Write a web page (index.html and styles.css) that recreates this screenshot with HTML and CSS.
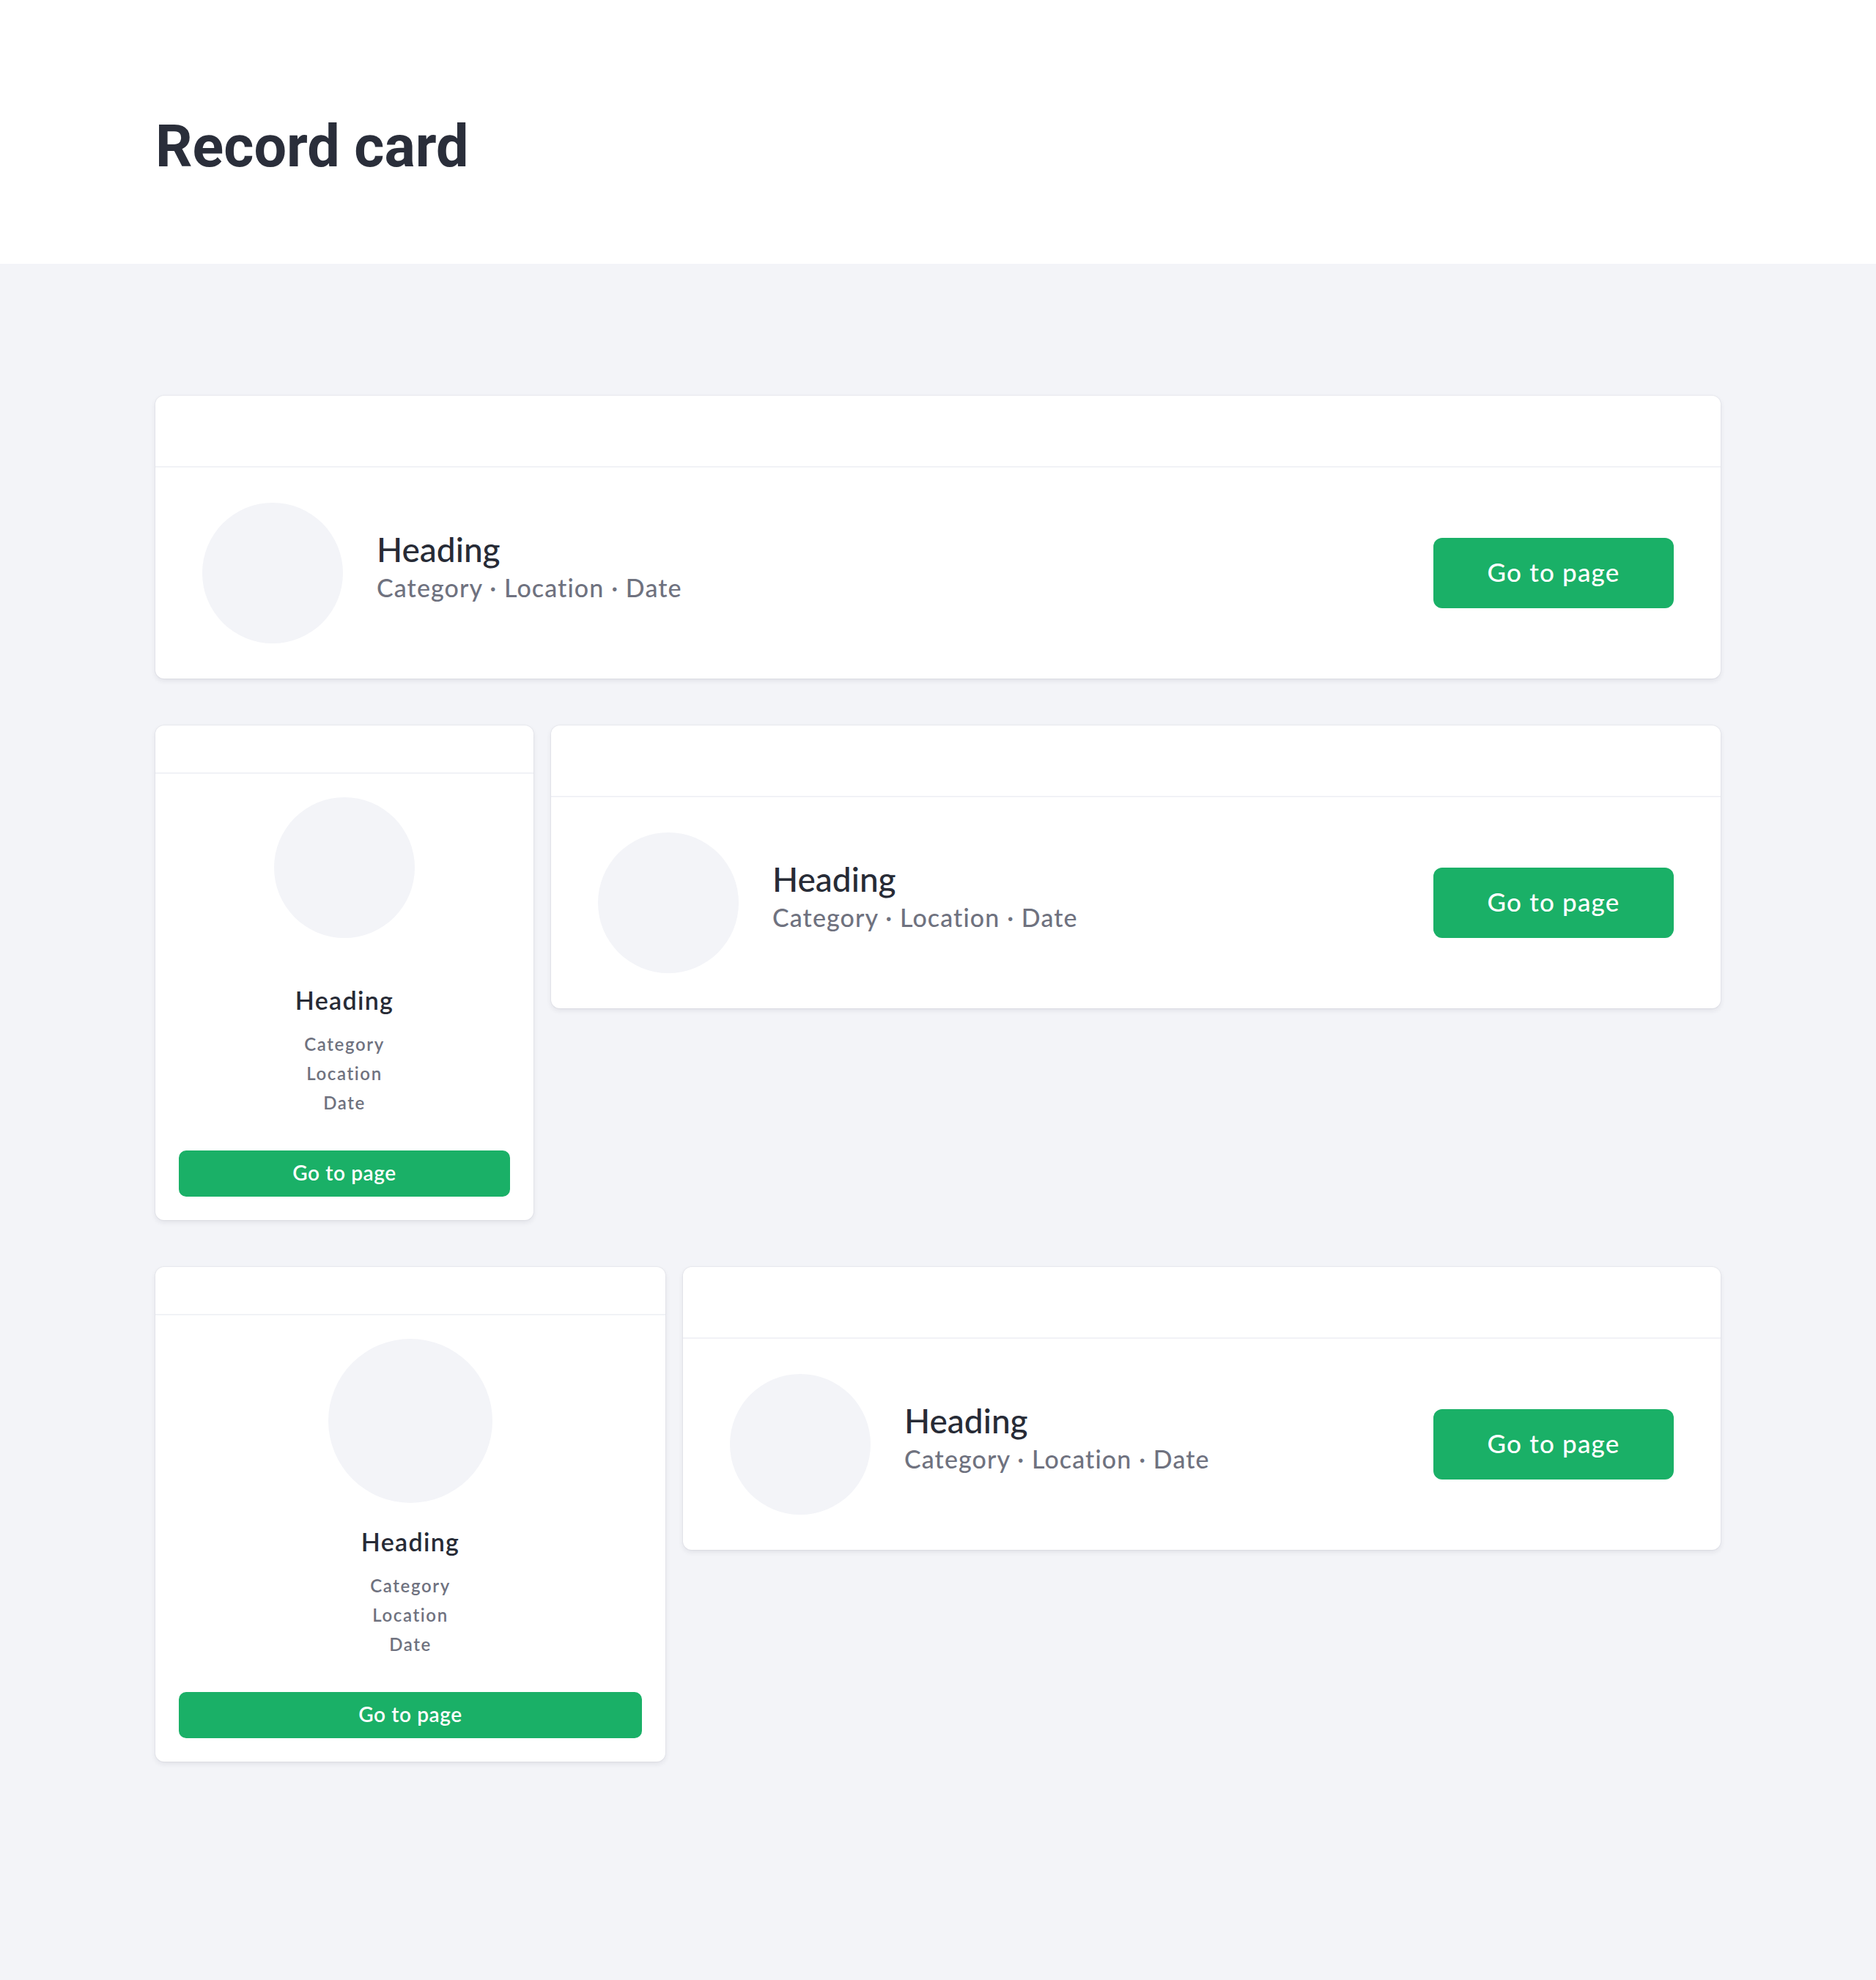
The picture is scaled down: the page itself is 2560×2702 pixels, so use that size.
FILE: index.html
```html
<!DOCTYPE html>
<html lang="en">
<head>
<meta charset="utf-8">
<title>Record card</title>
<link rel="stylesheet" href="styles.css">
</head>
<body>
<header class="page-header">
  <h1 class="page-title">Record card</h1>
</header>
<main class="page-main">
  <div class="row">
    <div class="card card--wide">
      <div class="card-head"></div>
      <div class="card-body-h">
        <div class="avatar"></div>
        <div class="info-h">
          <div class="heading-h">Heading</div>
          <div class="meta-h">Category · Location · Date</div>
        </div>
        <a class="btn-h">Go to page</a>
      </div>
    </div>
  </div>

  <div class="row">
    <div class="card card--narrow">
      <div class="card-head card-head--small"></div>
      <div class="card-body-v">
        <div class="avatar-box"><div class="avatar"></div></div>
        <div class="heading-v">Heading</div>
        <div class="meta-v">
          <span>Category</span>
          <span>Location</span>
          <span>Date</span>
        </div>
        <a class="btn-v">Go to page</a>
      </div>
    </div>
    <div class="card card--wide">
      <div class="card-head"></div>
      <div class="card-body-h">
        <div class="avatar"></div>
        <div class="info-h">
          <div class="heading-h">Heading</div>
          <div class="meta-h">Category · Location · Date</div>
        </div>
        <a class="btn-h">Go to page</a>
      </div>
    </div>
  </div>

  <div class="row">
    <div class="card card--medium">
      <div class="card-head card-head--small"></div>
      <div class="card-body-v">
        <div class="avatar-box"><div class="avatar avatar--large"></div></div>
        <div class="heading-v">Heading</div>
        <div class="meta-v">
          <span>Category</span>
          <span>Location</span>
          <span>Date</span>
        </div>
        <a class="btn-v">Go to page</a>
      </div>
    </div>
    <div class="card card--wide">
      <div class="card-head"></div>
      <div class="card-body-h">
        <div class="avatar"></div>
        <div class="info-h">
          <div class="heading-h">Heading</div>
          <div class="meta-h">Category · Location · Date</div>
        </div>
        <a class="btn-h">Go to page</a>
      </div>
    </div>
  </div>
</main>
</body>
</html>
```

FILE: styles.css
```css
* { box-sizing: border-box; }

html {
  background: #f3f4f8;
}

body {
  margin: 0;
  font-family: "Lato", "Open Sans", sans-serif;
  color: #272b36;
  background: #f3f4f8;
}

.page-header {
  height: 360px;
  background: #ffffff;
  padding: 161px 212px 0;
}

.page-title {
  margin: 0;
  font-family: "Roboto", "Liberation Sans", sans-serif;
  font-weight: 700;
  font-size: 79px;
  line-height: 79px;
  color: #2a2e3a;
}

.page-main {
  padding: 180px 212px 296px;
  display: flex;
  flex-direction: column;
  gap: 64px;
}

.row {
  display: flex;
  align-items: flex-start;
  gap: 24px;
}

.card {
  background: #ffffff;
  border-radius: 12px;
  box-shadow: 0 0 0 1px rgba(30, 35, 60, 0.035), 0 3px 7px rgba(30, 35, 60, 0.09);
  overflow: hidden;
}

.card--wide { flex: 1 1 auto; }
.card--narrow { flex: 0 0 516px; }
.card--medium { flex: 0 0 696px; }

.card-head {
  height: 98px;
  border-bottom: 2px solid #f1f2f6;
}

.card-head--small {
  height: 66px;
}

.avatar {
  width: 192px;
  height: 192px;
  border-radius: 50%;
  background: #f3f4f8;
  flex: 0 0 auto;
}

.avatar--large {
  width: 224px;
  height: 224px;
}

/* horizontal layout */
.card-body-h {
  height: 288px;
  padding: 0 64px;
  display: flex;
  align-items: center;
}

.info-h {
  flex: 1 1 auto;
  margin-left: 46px;
  padding-bottom: 17px;
}

.heading-h {
  font-size: 46px;
  line-height: 56px;
  font-weight: 500;
  color: #272b36;
}

.meta-h {
  font-size: 34px;
  line-height: 48px;
  font-weight: 500;
  letter-spacing: 1.1px;
  color: #6f727f;
}

.btn-h {
  flex: 0 0 328px;
  height: 96px;
  padding-bottom: 4px;
  border-radius: 12px;
  background: #1ab067;
  color: #ffffff;
  font-size: 35px;
  font-weight: 500;
  letter-spacing: 1.2px;
  display: flex;
  align-items: center;
  justify-content: center;
  text-decoration: none;
}

/* vertical layout */
.card-body-v {
  padding: 32px;
  display: flex;
  flex-direction: column;
  align-items: center;
  text-align: center;
}

.avatar-box {
  height: 224px;
  display: flex;
  justify-content: center;
  align-items: flex-start;
}

.heading-v {
  margin-top: 33px;
  font-size: 34px;
  line-height: 40px;
  font-weight: 600;
  letter-spacing: 1.3px;
  color: #272b36;
}

.meta-v {
  margin-top: 20px;
  display: flex;
  flex-direction: column;
  font-size: 24px;
  line-height: 40px;
  font-weight: 600;
  letter-spacing: 1.6px;
  color: #6f727f;
}

.btn-v {
  margin-top: 45px;
  align-self: stretch;
  height: 63px;
  padding-bottom: 4px;
  border-radius: 10px;
  background: #1ab067;
  color: #ffffff;
  font-size: 28px;
  font-weight: 600;
  letter-spacing: 0.6px;
  display: flex;
  align-items: center;
  justify-content: center;
  text-decoration: none;
}
```
